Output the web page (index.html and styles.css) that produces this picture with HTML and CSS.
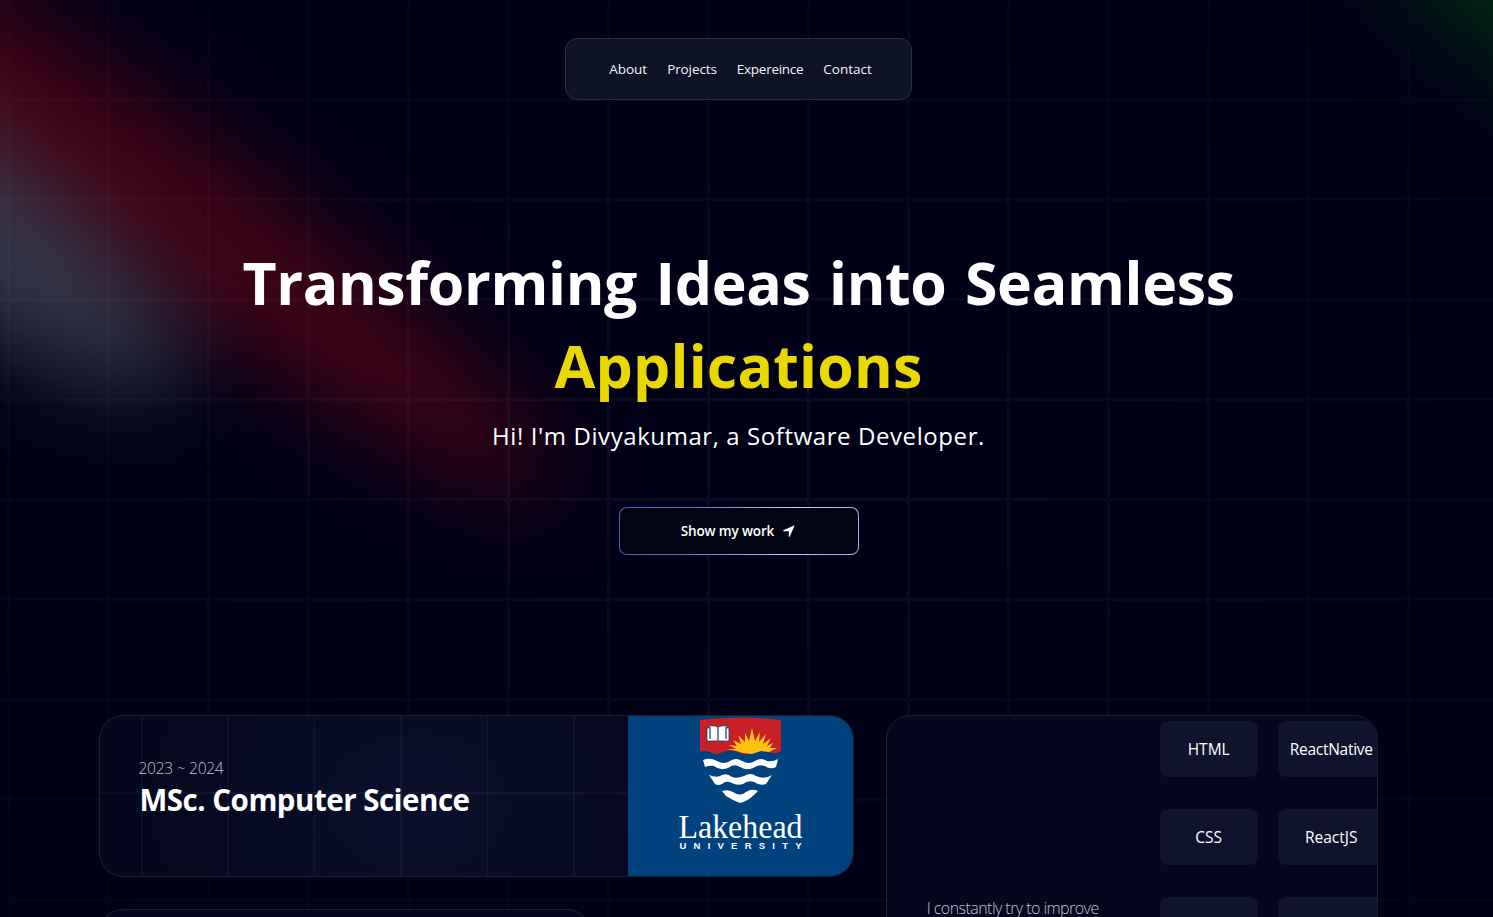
FILE: index.html
```
<!DOCTYPE html>
<html lang="en">
<head>
<meta charset="utf-8">
<title>Divyakumar | Software Developer</title>
<link rel="stylesheet" href="styles.css">
</head>
<body>
<svg class="backdrop" viewBox="0 0 1493 917" aria-hidden="true">
  <defs>
    <filter id="soft" filterUnits="userSpaceOnUse" x="-900" y="-500" width="3300" height="1800" color-interpolation-filters="sRGB"><feGaussianBlur stdDeviation="46"/></filter>
    <pattern id="grid" x="7" y="98" width="100" height="100" patternUnits="userSpaceOnUse">
      <path d="M0 1.5H100M1.5 0V100" stroke="#fff" stroke-opacity=".045" stroke-width="3"/>
    </pattern>
    <radialGradient id="fade" cx=".5" cy=".5" r=".65"><stop offset="0" stop-color="#fff"/><stop offset="1" stop-color="#fff" stop-opacity=".3"/></radialGradient>
    <mask id="vignette"><rect width="1493" height="917" fill="url(#fade)"/></mask>
  </defs>
  <g filter="url(#soft)">
    <ellipse cx="100" cy="160" rx="560" ry="78" fill="#400316" transform="rotate(36 100 160)"/>
  </g>
  <g filter="url(#soft)">
    <ellipse cx="-80" cy="195" rx="320" ry="84" fill="#748090" fill-opacity=".42" transform="rotate(35 -80 195)"/>
  </g>
  <g filter="url(#soft)">
    <ellipse cx="1550" cy="0" rx="240" ry="85" fill="#002612" transform="rotate(37 1550 0)"/>
  </g>
  <rect width="1493" height="917" fill="url(#grid)" mask="url(#vignette)"/>
</svg>
<main class="page">
  <nav class="nav">
    <a class="nav-about">About</a><a class="nav-projects">Projects</a><a class="nav-exp">Expereince</a><a class="nav-contact">Contact</a>
  </nav>
  <header class="hero">
    <h1><span class="line-one">Transforming Ideas into Seamless</span><br><span class="accent">Applications</span></h1>
    <p class="intro">Hi! I'm Divyakumar, a Software Developer.</p>
    <a class="cta"><span class="cta-face"><span class="cta-text">Show my work</span>
      <svg class="arrow" viewBox="0 0 12 12"><path d="M11.700 .3 .3 5.300V6.200H5.800V11.700H6.700Z" fill="#fff"/></svg></span></a>
  </header>
  <section class="bento">
    <article class="card card-degree">
      <div class="degree-copy"><p class="years">2023 ~ 2024</p><h2>MSc. Computer Science</h2></div>
      <svg class="crest" viewBox="1 0 225 162">
        <rect width="226" height="162" fill="#00427e"/>
        <path d="M73 5Q113 0 154 5V36Q148 40 141 37 133 34 126 38 118 41 110 37 102 34 96 37 89 41 83 37 78 35 73 37Z" fill="#c92027"/>
        <path d="M100 34 109 34 102 30 110 31 106 25 114 29 111 20 118 27 118 18 122 26 125 13 128 26 133 17 132 27 139 19 136 29 144 23 140 31 146 28 143 33 150 33 142 37 134 36 125 39 116 38 110 36Z" fill="#ffc20e"/>
        <path d="M80 13V26H90Q91 25 92 26H102V13H100V11Q95 10 91 12 87 10 82 11V13Z" fill="#fff" stroke="#123b72" stroke-width=".8"/><path d="M91 12V25M83 12V24M99 12V24" stroke="#123b72" stroke-width="1.2"/>
        <path d="M76 45Q83 42 90 46 97 50 103 46 109 42 115 46 122 50 128 46 134 42 140 46 146 47 151 44L149 52Q143 55 138 51 132 49 126 53 120 56 113 52 107 48 101 53 93 56 87 51 83 50 78 52Z" fill="#fff"/>
        <path d="M82 60Q89 63 93 61 99 57 105 62 110 64 117 61 124 57 129 61 137 65 145 60L139 69Q133 71 127 67 121 65 116 69 110 71 105 68 99 65 95 69 91 71 88 69Z" fill="#fff"/>
        <path d="M95 76Q101 74 106 77 113 82 119 77 125 73 131 76L127 80Q121 86 113 88 105 85 99 81Z" fill="#fff"/>
        <text x="51.500" y="123" class="crest-name" textLength="124" lengthAdjust="spacingAndGlyphs">Lakehead</text>
        <text x="52.500" y="133.800" class="crest-sub" textLength="122">UNIVERSITY</text>
      </svg>
    </article>
    <article class="card card-stack">
      <p class="stack-copy">I constantly try to improve</p>
      <ul class="stack-col"><li>HTML</li><li>CSS</li><li></li></ul>
      <ul class="stack-col stack-wide"><li class="t-native">ReactNative</li><li>ReactJS</li><li></li></ul>
    </article>
    <article class="card card-next"></article>
  </section>
</main>
</body>
</html>
```
FILE: styles.css
```
* { box-sizing: border-box; margin: 0; padding: 0; }
body { height: 917px; overflow: hidden; background: #000117; color: #fff; font-family: "Open Sans", "Noto Sans", sans-serif; }
.backdrop { position: absolute; inset: 0; width: 1493px; height: 917px; }
.page { position: relative; width: 1477px; height: 917px; overflow: hidden; display: flex; flex-direction: column; align-items: center; padding-top: 38px; }
.nav { display: flex; flex: none; align-items: center; justify-content: center; gap: 20px; width: 347px; height: 62px; padding-left: 4px; border: 1px solid #2a3040; border-radius: 12px; background: #0d1226; color: #f5f5f7; font-size: 13.5px; line-height: 20px; white-space: nowrap; }
.nav-projects { letter-spacing: -.1px; }
.nav-exp { letter-spacing: -.27px; }
.hero { display: flex; flex: none; flex-direction: column; align-items: center; margin-top: 141px; white-space: nowrap; }
h1 { text-align: center; font-size: 59px; line-height: 83px; font-weight: 700; }
.line-one { letter-spacing: -.35px; word-spacing: 3.5px; }
.accent { color: #e9d800; letter-spacing: .2px; }
.intro { margin-top: 13px; font-size: 24px; line-height: 32px; letter-spacing: .58px; }
.cta { display: block; width: 240px; height: 48px; margin: 55px 0 0 1px; padding: 1px; border-radius: 8px; background: linear-gradient(100deg, #5a55be, #6f68c8 30%, #d3c2f2 70%, #b3a4df); }
.cta-face { display: flex; height: 100%; align-items: center; justify-content: center; gap: 9px; padding-right: 2px; border-radius: 7px; background: #020514; font-size: 13.5px; font-weight: 650; letter-spacing: -.15px; }
.arrow { width: 12px; height: 12px; }
.bento { display: grid; flex: none; grid-template-columns: repeat(5, 230.4px); grid-template-rows: 162px 300px; gap: 32px; margin-top: 160px; }
.card { overflow: hidden; border: 1px solid #1c1f30; border-radius: 24px; background: #04071d; }
.card-degree { grid-column: span 3; display: flex; justify-content: space-between; background: radial-gradient(ellipse 280px 220px at 42% 55%, #0b0f2c, #04071d); }
.card-stack { grid-column: span 2; grid-row: span 2; display: flex; gap: 20px; }
.card-next { grid-column: span 2; }
.degree-copy { flex: 1; padding: 42px 0 0 40px; background: linear-gradient(transparent 76px, #ffffff09 76px 78px, transparent 78px), repeating-linear-gradient(90deg, transparent 0 41px, #ffffff0b 41px 42.500px, transparent 42.500px 86.400px); }
.years { margin-left: -1px; color: #c1c2d3; font-size: 15.5px; line-height: 20px; font-weight: 350; letter-spacing: -.25px; }
h2 { padding-top: 1px; font-size: 29.5px; line-height: 42px; font-weight: 700; letter-spacing: -.5px; }
.crest { width: 225px; height: 162px; margin-top: -1px; flex: none; }
.crest-name { font: 34px "Liberation Serif", serif; fill: #fff; }
.crest-sub { font: 700 9.5px "Liberation Sans", sans-serif; fill: #fff; }
.stack-copy { width: 253px; flex: none; padding: 181px 0 0 40px; color: #c1c2d3; font-size: 16px; line-height: 22px; font-weight: 350; letter-spacing: -.55px; white-space: nowrap; }
.stack-col { display: flex; flex: none; flex-direction: column; gap: 32px; width: 98px; margin-top: 5px; list-style: none; }
.stack-wide { width: 107px; }
.stack-col li { display: flex; align-items: center; justify-content: center; height: 56px; border-radius: 8px; background: #10132e; font-size: 15.5px; }
.stack-col .t-native { letter-spacing: -.27px; }
```
